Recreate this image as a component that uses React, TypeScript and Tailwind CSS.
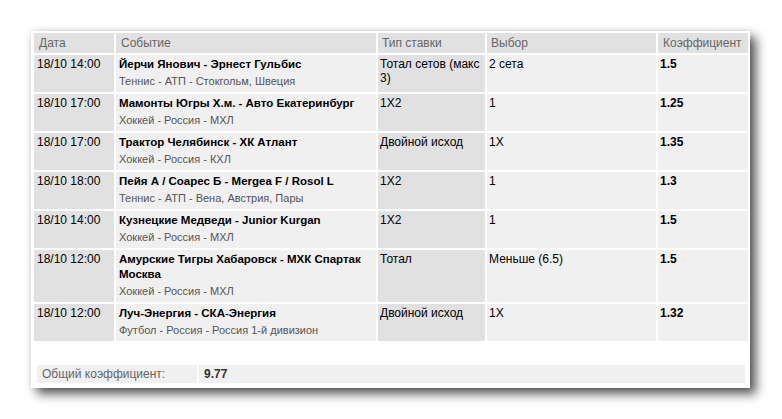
const bets = [
  {
    date: "18/10 14:00",
    event: "Йерчи Янович - Эрнест Гульбис",
    league: "Теннис - АТП - Стокгольм, Швеция",
    type: "Тотал сетов (макс 3)",
    pick: "2 сета",
    odds: "1.5",
  },
  {
    date: "18/10 17:00",
    event: "Мамонты Югры Х.м. - Авто Екатеринбург",
    league: "Хоккей - Россия - МХЛ",
    type: "1X2",
    pick: "1",
    odds: "1.25",
  },
  {
    date: "18/10 17:00",
    event: "Трактор Челябинск - ХК Атлант",
    league: "Хоккей - Россия - КХЛ",
    type: "Двойной исход",
    pick: "1X",
    odds: "1.35",
  },
  {
    date: "18/10 18:00",
    event: "Пейя А / Соарес Б - Mergea F / Rosol L",
    league: "Теннис - АТП - Вена, Австрия, Пары",
    type: "1X2",
    pick: "1",
    odds: "1.3",
  },
  {
    date: "18/10 14:00",
    event: "Кузнецкие Медведи - Junior Kurgan",
    league: "Хоккей - Россия - МХЛ",
    type: "1X2",
    pick: "1",
    odds: "1.5",
  },
  {
    date: "18/10 12:00",
    event: "Амурские Тигры Хабаровск - МХК Спартак Москва",
    league: "Хоккей - Россия - МХЛ",
    type: "Тотал",
    pick: "Меньше (6.5)",
    odds: "1.5",
  },
  {
    date: "18/10 12:00",
    event: "Луч-Энергия - СКА-Энергия",
    league: "Футбол - Россия - Россия 1-й дивизион",
    type: "Двойной исход",
    pick: "1X",
    odds: "1.32",
  },
]

function App() {
  return (
    <div className="min-h-[419px] bg-white pt-[31px] pl-[31px] font-['Liberation_Sans',Arial,sans-serif] text-[12px]">
      <div className="w-[719px] bg-white pl-[1px] pb-[5px] shadow-[6px_6px_10px_rgba(0,0,0,0.65),0_0_6px_rgba(0,0,0,0.12)]">
        <table className="w-[718px] table-fixed border-separate border-spacing-[2px]">
          <thead>
            <tr className="h-[20px] bg-[#e1e1e1] text-left text-[#666]">
              <th className="w-[80px] pl-[5px] font-normal">Дата</th>
              <th className="w-[260px] pl-[5px] font-normal">Событие</th>
              <th className="w-[107px] pl-[4px] font-normal">Тип ставки</th>
              <th className="w-[169px] pl-[4px] font-normal">Выбор</th>
              <th className="w-[90px] pl-[5px] font-normal">Коэффициент</th>
            </tr>
          </thead>
          <tbody>
            {bets.map((bet, i) => (
              <tr key={i} className="align-top leading-[15px] text-black">
                <td className="bg-[#e1e1e1] pt-[2px] pl-[3px]">{bet.date}</td>
                <td className="bg-[#f0f0f0] pt-[2px] pb-[4px] pl-[3px] pr-[2px]">
                  <div className="text-[11.5px] font-bold">{bet.event}</div>
                  <div className="mt-[3px] text-[11px] leading-[13px] text-[#555]">
                    {bet.league}
                  </div>
                </td>
                <td className="bg-[#e1e1e1] pt-[2px] pl-[2px] pr-[1px] leading-[14px]">
                  {bet.type}
                </td>
                <td className="bg-[#f0f0f0] pt-[2px] pl-[2px]">{bet.pick}</td>
                <td className="bg-[#f0f0f0] pt-[2px] pl-[2px] font-bold">{bet.odds}</td>
              </tr>
            ))}
          </tbody>
        </table>

        <div className="mt-[22px] ml-[5px] mr-[5px] flex h-[18px] gap-[2px] leading-[18px]">
          <div className="w-[160px] bg-[#f0f0f0] pl-[5px] text-[#666]">Общий коэффициент:</div>
          <div className="flex-1 bg-[#f0f0f0] pl-[5px] font-bold text-[#333]">9.77</div>
        </div>
      </div>
    </div>
  )
}

export default App
